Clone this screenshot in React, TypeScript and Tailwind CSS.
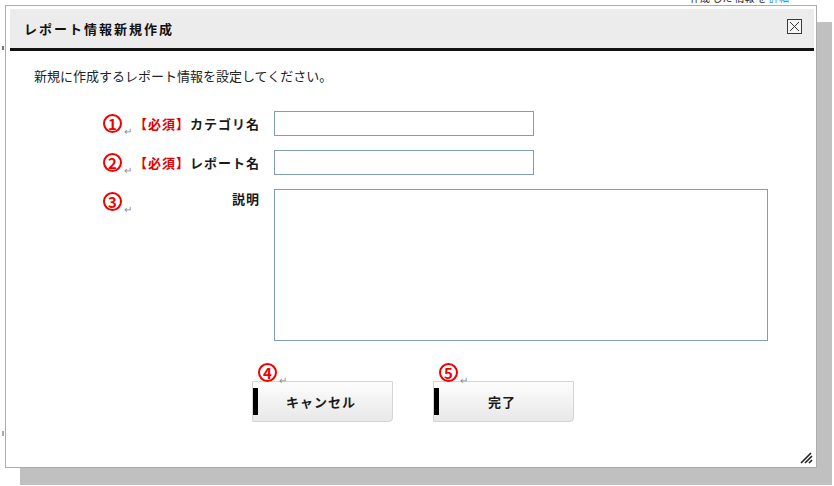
import React from "react";

const FONT = "[font-family:'Noto_Sans_CJK_JP','Noto_Sans',sans-serif]";

function Marker({ n }: { n: string }) {
  return (
    <span className="flex items-end">
      <span className="flex h-[19px] w-[19px] items-center justify-center rounded-full border-2 border-[#f00000] text-[15px] font-bold leading-none text-[#f00000]">
        {n}
      </span>
      <span className="ml-[2px] mb-[-3px] text-[10px] leading-none text-[#8a8a8a]">↵</span>
    </span>
  );
}

function Row({
  n,
  required,
  label,
  children,
  tall,
}: {
  n: string;
  required?: boolean;
  label: string;
  children: React.ReactNode;
  tall?: boolean;
}) {
  return (
    <div className="flex items-start gap-[14px]">
      <div className="flex h-[25px] w-[157px] items-center justify-between">
        <Marker n={n} />
        <span className={`text-[13px] font-bold tracking-[1px] text-[#1a1a1a] ${tall ? "mb-[5px]" : ""}`}>
          {required && <span className="text-[#e00000]">【必須】</span>}
          {label}
        </span>
      </div>
      {children}
    </div>
  );
}

function DlgButton({ n, label }: { n: string; label: string }) {
  return (
    <div className="relative">
      <div className="absolute left-[6px] top-[-18px] z-10">
        <Marker n={n} />
      </div>
      <button className="flex h-[41px] w-[141px] items-center rounded-br-[4px] border border-[#d4d4d4] bg-gradient-to-b from-[#fdfdfd] to-[#e8e8e8]">
        <span className="h-[27px] w-[5px] bg-black" />
        <span className="flex-1 pr-[8px] text-[13px] font-bold tracking-[1px] text-[#1a1a1a]">{label}</span>
      </button>
    </div>
  );
}

export default function App() {
  return (
    <div className={`relative h-[486px] w-[834px] overflow-hidden bg-white ${FONT}`}>
      {/* page behind the dialog */}
      <div className="absolute left-[690px] top-[-7px] whitespace-nowrap text-[10px] leading-[10px] text-[#222]">
        作成 した 情報 を <span className="text-[#1a8fd6]">詳細</span>
      </div>
      <div className="absolute left-[2px] top-[46px] h-[4px] w-[2px] bg-[#777]" />
      <div className="absolute left-[2px] top-[431px] h-[5px] w-[2px] bg-[#aaa]" />

      <div className="relative ml-[5px] mt-[5px] h-[463px] w-[812px] border border-[#acacac] bg-white pl-[4px] pr-[2px] pt-[3px] shadow-[15px_17px_0_0_#c0c0c0]">
        {/* header */}
        <div className="flex h-[42px] items-start justify-between border-b-[3px] border-[#111] bg-[#ececec] pl-[14px] pr-[12px]">
          <span className="mt-[11px] text-[13px] font-bold leading-[18px] tracking-[2px] text-[#111]">
            レポート情報新規作成
          </span>
          <span className="mt-[10px] flex h-[15px] w-[15px] items-center justify-center border border-[#3a3a3a] bg-[#f4f4f4]">
            <svg width="11" height="11" viewBox="0 0 11 11">
              <path d="M1 1 L10 10 M10 1 L1 10" stroke="#333" strokeWidth="1" fill="none" />
            </svg>
          </span>
        </div>

        {/* body */}
        <div className="pl-[24px] pt-[16px]">
          <p className="text-[13px] leading-[18px] text-[#222]">新規に作成するレポート情報を設定してください。</p>

          <div className="ml-[69px] mt-[26px] flex flex-col gap-[14px]">
            <Row n="1" required label="カテゴリ名">
              <input className="h-[25px] w-[260px] border border-[#7f9db9] bg-white outline-none" />
            </Row>
            <Row n="2" required label="レポート名">
              <input className="h-[25px] w-[260px] border border-[#7f9db9] bg-white outline-none" />
            </Row>
            <Row n="3" label="説明" tall>
              <textarea className="h-[152px] w-[494px] resize-none border border-[#7f9db9] bg-white outline-none" />
            </Row>
          </div>

          <div className="ml-[218px] mt-[40px] flex gap-[40px]">
            <DlgButton n="4" label="キャンセル" />
            <DlgButton n="5" label="完了" />
          </div>
        </div>

        {/* resize grip */}
        <svg className="absolute bottom-[3px] right-[3px]" width="13" height="13" viewBox="0 0 13 13">
          <path d="M1 12 L11 2 M5 12 L12 5 M9 12 L12 9" stroke="#222" strokeWidth="1.6" fill="none" />
        </svg>
      </div>
    </div>
  );
}
